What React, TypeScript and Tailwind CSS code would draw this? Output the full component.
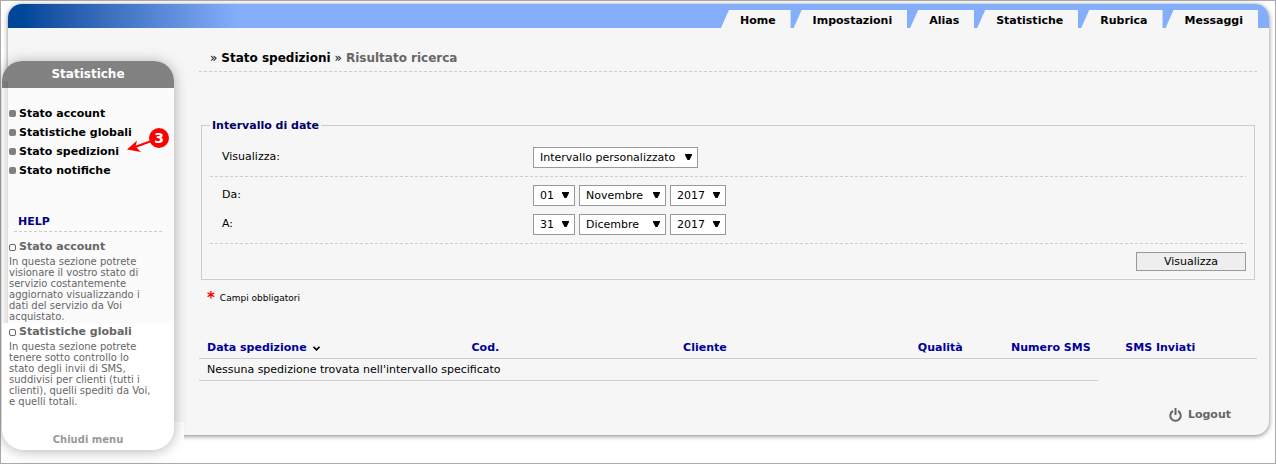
import clsx from "clsx";
import type { ReactNode } from "react";

const TABS = [
  "Home",
  "Impostazioni",
  "Alias",
  "Statistiche",
  "Rubrica",
  "Messaggi",
];

const MENU = [
  "Stato account",
  "Statistiche globali",
  "Stato spedizioni",
  "Stato notifiche",
];

const HELP = [
  {
    title: "Stato account",
    text: "In questa sezione potrete visionare il vostro stato di servizio costantemente aggiornato visualizzando i dati del servizio da Voi acquistato.",
  },
  {
    title: "Statistiche globali",
    text: "In questa sezione potrete tenere sotto controllo lo stato degli invii di SMS, suddivisi per clienti (tutti i clienti), quelli spediti da Voi, e quelli totali.",
  },
];

const MONTHS = [
  "Gennaio",
  "Febbraio",
  "Marzo",
  "Aprile",
  "Maggio",
  "Giugno",
  "Luglio",
  "Agosto",
  "Settembre",
  "Ottobre",
  "Novembre",
  "Dicembre",
];

const DAYS = Array.from({ length: 31 }, (_, i) =>
  String(i + 1).padStart(2, "0"),
);

interface SelectProps {
  id?: string;
  label?: string;
  value: string;
  options: string[];
  className: string;
}

function Select({ id, label, value, options, className }: SelectProps) {
  return (
    <span className={clsx("relative inline-flex", className)}>
      <select
        id={id}
        aria-label={label}
        defaultValue={value}
        className="h-[21px] w-full appearance-none border border-[#999] bg-white pl-1.5 text-[11px] leading-[19px] text-black"
      >
        {options.map((option) => (
          <option key={option}>{option}</option>
        ))}
      </select>
      <svg
        viewBox="0 0 7 6"
        className="pointer-events-none absolute top-[7px] right-1.5 h-1.5 w-[7px]"
      >
        <path d="M0 0h7v1L4.5 6h-2L0 1z" fill="#000" />
      </svg>
    </span>
  );
}

interface DateRowProps {
  id: string;
  label: string;
  day: string;
  month: string;
}

function DateRow({ id, label, day, month }: DateRowProps) {
  return (
    <FormRow id={id} label={label}>
      <Select id={id} value={day} options={DAYS} className="w-[42px]" />
      <Select
        label={`${label} mese`}
        value={month}
        options={MONTHS}
        className="w-[87px]"
      />
      <Select
        label={`${label} anno`}
        value="2017"
        options={["2016", "2017", "2018"]}
        className="w-14"
      />
    </FormRow>
  );
}

interface FormRowProps {
  id: string;
  label: string;
  children: ReactNode;
}

function FormRow({ id, label, children }: FormRowProps) {
  return (
    <div className="flex items-start gap-1 pl-3">
      <label htmlFor={id} className="w-[307px] shrink-0 leading-5">
        {label}
      </label>
      {children}
    </div>
  );
}

function DashedLine({ className }: { className?: string }) {
  return (
    <div
      className={clsx(
        "h-px bg-[repeating-linear-gradient(90deg,#ccc_0_3px,transparent_3px_5px)]",
        className,
      )}
    />
  );
}

function Header() {
  return (
    <header className="flex h-6 items-end justify-end rounded-t-[14px] bg-linear-to-r from-[#004799] from-[16px] to-[#84aefc] to-[230px] pr-[11px]">
      <nav className="flex gap-[3px]">
        {TABS.map((tab) => (
          <a
            key={tab}
            href="#"
            className="h-[18px] bg-[#f6f6f6] pr-[15px] pl-[19px] leading-[21px] font-bold [clip-path:polygon(8px_0,100%_0,100%_100%,0_100%)]"
          >
            {tab}
          </a>
        ))}
      </nav>
    </header>
  );
}

function Marker() {
  return (
    <svg
      viewBox="0 0 44 30"
      className="pointer-events-none absolute top-[-55px] left-[124px] h-[30px] w-11"
    >
      <path d="M24 16.5 9 22" stroke="#f00" strokeWidth="2" fill="none" />
      <path d="M1 24.5 11 15.5 9.5 21.5 15 27z" fill="#f00" />
      <circle cx="33" cy="13" r="10" fill="#f00" />
      <text
        x="33"
        y="18"
        textAnchor="middle"
        fill="#fff"
        fontSize="14"
        fontWeight="700"
      >
        3
      </text>
    </svg>
  );
}

function Sidebar() {
  return (
    <aside className="relative col-start-1 row-start-1 mt-[60px] ml-px flex w-[172px] flex-col self-start rounded-t-[20px] rounded-b-[22px] bg-linear-to-b from-[#fbfbfb] from-[262px] to-white to-[263px] shadow-[0_1px_14px_rgba(0,0,0,0.3)]">
      <h2 className="h-[27px] rounded-t-[20px] bg-[#828282] text-center text-[12px] leading-[27px] font-bold text-white">
        Statistiche
      </h2>
      {/* edge of the page panel showing through the menu */}
      <div className="pointer-events-none absolute top-5 left-0 h-[242px] w-1.5 bg-linear-to-r from-black/2 to-black/12" />
      <ul className="pt-4 pl-[7px]">
        {MENU.map((item) => (
          <li key={item} className="flex h-[19px] items-center gap-[3px]">
            <span className="size-[7px] rounded-[2px] bg-[#808080]" />
            <a href="#" className="leading-[19px] font-bold">
              {item}
            </a>
          </li>
        ))}
      </ul>
      <div className="relative">
        <Marker />
      </div>
      <h3 className="mt-[33px] pl-4 leading-[18px] font-bold text-[#000080]">
        HELP
      </h3>
      <DashedLine className="mr-3 ml-3" />
      <div className="flex flex-col gap-px pt-1.5 pr-5 pl-[7px] text-[#666]">
        {HELP.map((item) => (
          <section key={item.title}>
            <h4 className="flex items-center gap-[3px] leading-[18px] font-bold">
              <span className="size-[7px] rounded-[2px] border border-[#666]" />
              {item.title}
            </h4>
            <p className="text-[10px] leading-[11px]">{item.text}</p>
          </section>
        ))}
      </div>
      <button
        type="button"
        className="mt-[26px] mb-[3px] text-[10px] leading-[14px] font-bold text-[#999]"
      >
        Chiudi menu
      </button>
    </aside>
  );
}

function Results() {
  return (
    <table className="mt-[31px] w-full table-fixed text-left">
      <colgroup>
        <col className="w-[25%]" />
        <col className="w-[20%]" />
        <col className="w-[22%]" />
        <col className="w-[9%]" />
        <col className="w-[9%]" />
        <col className="w-[15%]" />
      </colgroup>
      <thead className="leading-[21px] text-[#000099]">
        <tr className="border-b border-[#ccc]">
          <th className="pl-2">
            Data spedizione
            <svg viewBox="0 0 7 5" className="ml-1.5 inline h-[5px] w-[7px]">
              <path
                d="M.5.8l3 3 3-3"
                stroke="#000"
                strokeWidth="1.6"
                fill="none"
              />
            </svg>
          </th>
          <th className="pl-2">Cod.</th>
          <th className="pl-2">Cliente</th>
          <th className="pl-2.5">Qualità</th>
          <th className="pl-2">Numero SMS</th>
          <th className="pl-[27px]">SMS Inviati</th>
        </tr>
      </thead>
      <tbody>
        <tr>
          <td
            colSpan={5}
            className="border-b border-[#ccc] pl-2 leading-[21px]"
          >
            Nessuna spedizione trovata nell'intervallo specificato
          </td>
        </tr>
      </tbody>
    </table>
  );
}

function PowerIcon() {
  return (
    <svg viewBox="0 0 13 14" className="h-3.5 w-[13px]">
      <path
        d="M4 3a5.2 5.2 0 1 0 5 0M6.5 0v7"
        stroke="#666"
        strokeWidth="2"
        fill="none"
      />
    </svg>
  );
}

export default function App() {
  return (
    <div className="grid min-h-screen border border-[#aaa] bg-white font-['DejaVu_Sans',Verdana,sans-serif] text-[11px] text-black">
      <div className="col-start-1 row-start-1 mt-[3px] mr-1.5 mb-7 ml-[7px] flex flex-col rounded-[14px] bg-[#f6f6f6] shadow-[0_1px_5px_rgba(0,0,0,0.5)]">
        <Header />
        <main className="pr-3 pl-[191px]">
          <nav className="flex gap-1 pt-[22px] text-[12px] leading-4 font-bold">
            <span className="pl-[11px] font-normal">»</span>
            <a href="#">Stato spedizioni</a>
            <span className="font-normal">»</span>
            <span className="text-[#666]">Risultato ricerca</span>
          </nav>
          <DashedLine className="mt-[5px]" />
          <form onSubmit={(e) => e.preventDefault()}>
            <fieldset className="mt-11 mr-0.5 ml-0.5 border border-[#ccc] px-2 pb-2">
              <legend className="px-0.5 pt-0.5 leading-4 font-bold text-[#000066]">
                Intervallo di date
              </legend>
              <div className="pt-[13px] pb-2">
                <FormRow id="range" label="Visualizza:">
                  <Select
                    id="range"
                    value="Intervallo personalizzato"
                    options={["Oggi", "Ieri", "Intervallo personalizzato"]}
                    className="w-[165px]"
                  />
                </FormRow>
              </div>
              <DashedLine />
              <div className="flex flex-col gap-2 py-2">
                <DateRow id="from" label="Da:" day="01" month="Novembre" />
                <DateRow id="to" label="A:" day="31" month="Dicembre" />
              </div>
              <DashedLine />
              <div className="flex justify-end pt-2">
                <button
                  type="submit"
                  className="h-[19px] w-[110px] border border-[#999] bg-[#eee] leading-[17px]"
                >
                  Visualizza
                </button>
              </div>
            </fieldset>
          </form>
          <p className="flex items-center gap-[5px] pt-2.5 pl-2 text-[9px] leading-4">
            <span className="text-[15px] font-bold text-[#f00]">*</span>
            Campi obbligatori
          </p>
          <Results />
          <div className="flex justify-end pt-[26px] pr-[26px]">
            <a
              href="#"
              className="flex items-center gap-1.5 font-bold text-[#666]"
            >
              <PowerIcon />
              Logout
            </a>
          </div>
        </main>
      </div>
      {/* blank base below the menu */}
      <div className="col-start-1 row-start-1 h-[41px] w-[183px] self-end bg-white" />
      <Sidebar />
    </div>
  );
}
